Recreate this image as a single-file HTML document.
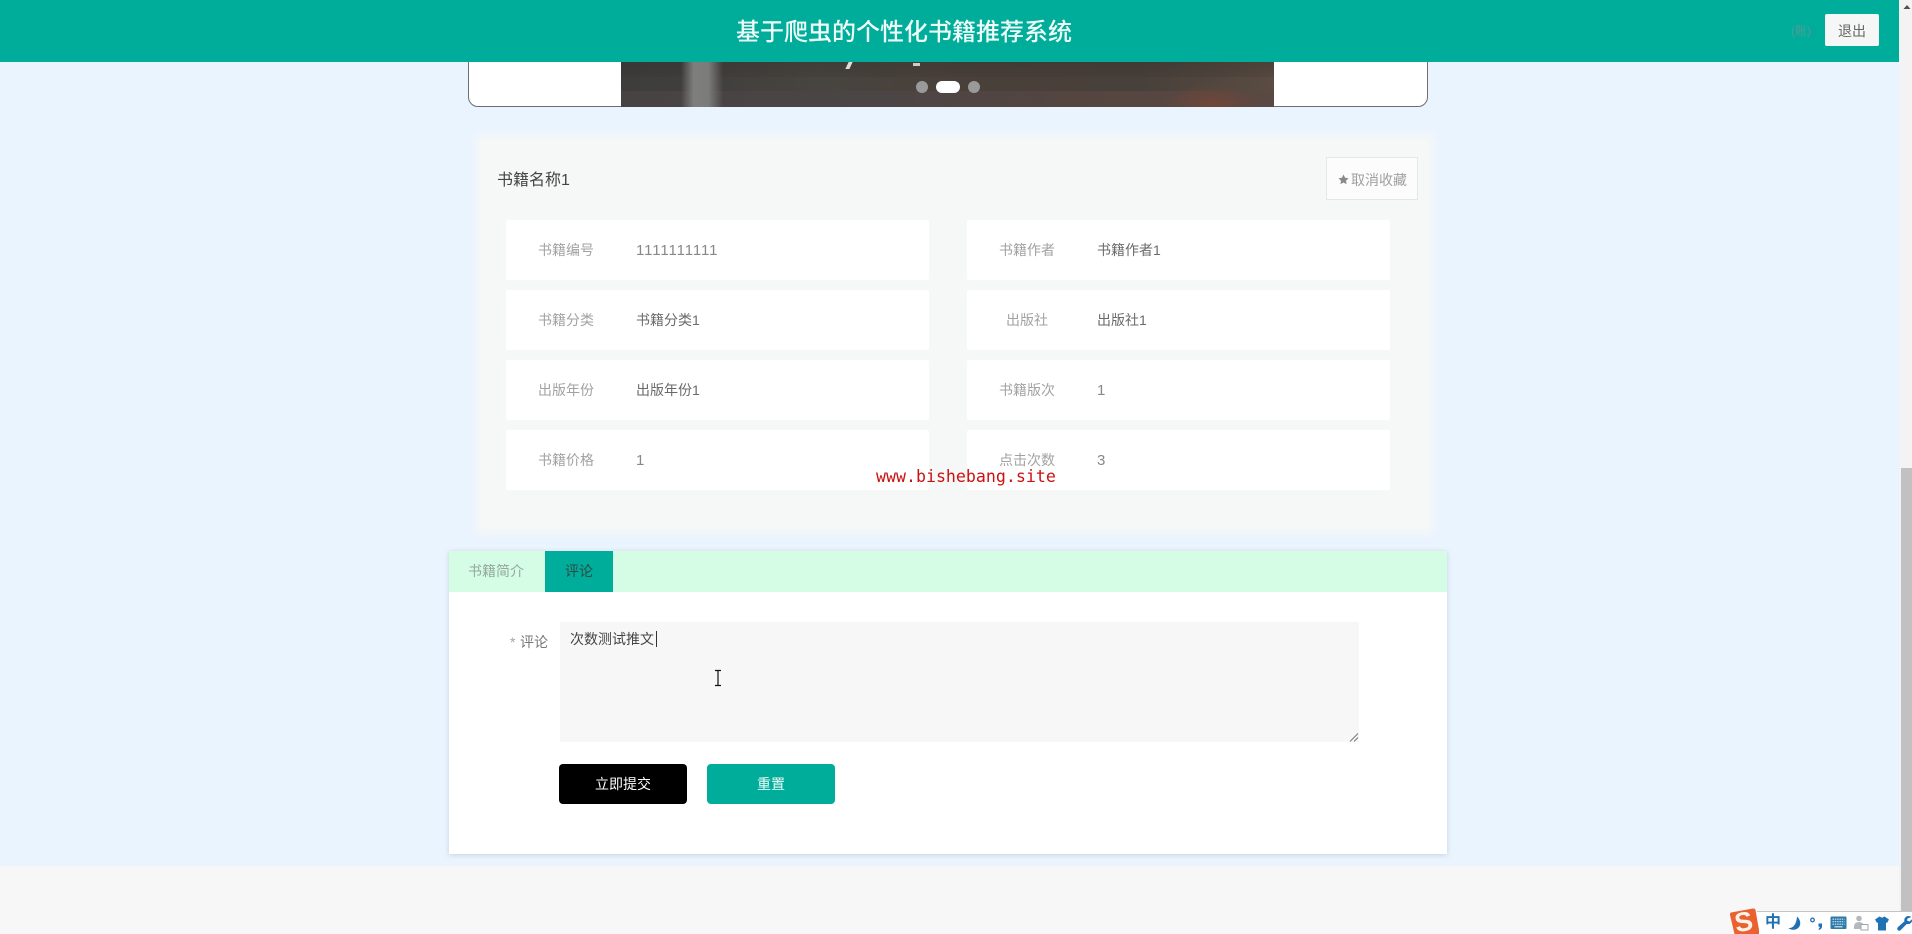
<!DOCTYPE html>
<html lang="zh">
<head>
<meta charset="utf-8">
<title>基于爬虫的个性化书籍推荐系统</title>
<style>
html,body{margin:0;padding:0;width:1912px;height:934px;overflow:hidden;background:#f7f7f7;font-family:"Liberation Sans","Noto Sans CJK SC",sans-serif;}
div,span{position:absolute;box-sizing:border-box;}
.t{white-space:nowrap;line-height:20px;font-size:14px;}
.row{background:#fff;height:60px;width:423px;border-radius:2px;}
.l{color:#a2a2a2;}
.v{color:#6a6a6a;}
</style>
</head>
<body>
<div style="left:0;top:0;width:1899px;height:866px;background:#eaf4fe;"></div>

<!-- carousel -->
<div style="left:468px;top:-20px;width:960px;height:127px;background:#fff;border:1px solid #6e6e72;border-radius:0 0 10px 10px;"></div>
<div style="left:621px;top:55px;width:653px;height:52px;overflow:hidden;background:#45403d;">
  <div style="left:0;top:0;width:653px;height:52px;background:linear-gradient(90deg,#3e3d3b 0,#3f3e3c 8%,#48443f 30%,#4a403a 55%,#48403a 80%,#5a4c42 100%);"></div>
  <div style="left:0;top:0;width:653px;height:22px;background:linear-gradient(180deg,rgba(48,44,40,.4),rgba(50,46,44,.15));"></div>
  <div style="left:0;top:36px;width:653px;height:16px;background:linear-gradient(90deg,#474342,#4c4545 40%,#544540 70%,#5a4842 100%);"></div>
  <div style="left:60px;top:0;width:42px;height:52px;background:linear-gradient(90deg,rgba(80,80,78,0),#7e7e7c 30%,#7c7c7a 65%,rgba(78,77,75,0));"></div>
  <div style="left:545px;top:30px;width:90px;height:22px;background:radial-gradient(ellipse at 50% 90%,rgba(125,70,52,.65),rgba(90,60,52,0) 75%);"></div>
  <div style="left:226px;top:7px;width:4px;height:7px;background:#ddd;transform:skewX(-25deg);"></div>
  <div style="left:292px;top:8px;width:7px;height:3px;background:#ccc;"></div>
</div>
<div style="left:916px;top:81px;width:12px;height:12px;border-radius:50%;background:#9a9a9a;"></div>
<div style="left:936px;top:81px;width:24px;height:12px;border-radius:6px;background:#fff;"></div>
<div style="left:968px;top:81px;width:12px;height:12px;border-radius:50%;background:#9a9a9a;"></div>

<!-- header -->
<div style="left:0;top:0;width:1899px;height:62px;background:#00ad9b;"></div>
<div class="t" style="left:736px;top:16px;font-size:24px;line-height:34px;color:#eefcf8;font-weight:500;">基于爬虫的个性化书籍推荐系统</div>
<div class="t" style="left:1791px;top:21px;font-size:12px;color:#4f9c95;">(账)</div>
<div style="left:1825px;top:14px;width:54px;height:32px;background:#f5f7f7;border-radius:2px;"></div>
<div class="t" style="left:1838px;top:21px;color:#666;">退出</div>

<!-- detail panel -->
<div style="left:481px;top:140px;width:948px;height:388px;background:#f6f7f7;box-shadow:0 0 8px 5px #f6f7f7;"></div>
<div class="t" style="left:497px;top:171px;font-size:16px;color:#444;">书籍名称1</div>
<div style="left:1326px;top:157px;width:92px;height:43px;background:#fcfcfc;border:1px solid #e6e6e6;"></div>
<svg style="position:absolute;left:1338px;top:174px" width="11" height="11" viewBox="0 0 24 24"><path d="M12 1l3.400 7.200 7.600 1-5.600 5.400 1.400 7.800L12 18.600 5.200 22.400l1.400-7.800L1 9.200l7.600-1z" fill="#8a8a8a"/></svg>
<div class="t" style="left:1351px;top:170px;color:#a0a0a0;">取消收藏</div>

<div class="row" style="left:506px;top:220px;"></div>
<div class="row" style="left:967px;top:220px;"></div>
<div class="row" style="left:506px;top:290px;"></div>
<div class="row" style="left:967px;top:290px;"></div>
<div class="row" style="left:506px;top:360px;"></div>
<div class="row" style="left:967px;top:360px;"></div>
<div class="row" style="left:506px;top:430px;"></div>
<div class="row" style="left:967px;top:430px;"></div>

<div class="t l" style="left:538px;top:240px;">书籍编号</div>
<div class="t v" style="left:636px;top:241px;color:#888;font-size:15px;letter-spacing:.9px;">1111111111</div>
<div class="t l" style="left:999px;top:240px;">书籍作者</div>
<div class="t v" style="left:1097px;top:240px;">书籍作者1</div>

<div class="t l" style="left:538px;top:310px;">书籍分类</div>
<div class="t v" style="left:636px;top:310px;">书籍分类1</div>
<div class="t l" style="left:1006px;top:310px;">出版社</div>
<div class="t v" style="left:1097px;top:310px;">出版社1</div>

<div class="t l" style="left:538px;top:380px;">出版年份</div>
<div class="t v" style="left:636px;top:380px;">出版年份1</div>
<div class="t l" style="left:999px;top:380px;">书籍版次</div>
<div class="t v" style="left:1097px;top:381px;color:#888;font-size:15px;">1</div>

<div class="t l" style="left:538px;top:450px;">书籍价格</div>
<div class="t v" style="left:636px;top:451px;color:#888;font-size:15px;">1</div>
<div class="t l" style="left:999px;top:450px;">点击次数</div>
<div class="t v" style="left:1097px;top:451px;color:#888;font-size:15px;">3</div>

<div class="t" style="left:876px;top:467px;font-family:'DejaVu Sans Mono',monospace;font-size:16.6px;color:#cc1111;">www.bishebang.site</div>

<!-- tabs panel -->
<div style="left:449px;top:551px;width:998px;height:303px;background:#fff;box-shadow:0 1px 5px rgba(120,140,160,.3);"></div>
<div style="left:449px;top:551px;width:998px;height:41px;background:#d5fde5;"></div>
<div style="left:545px;top:551px;width:68px;height:41px;background:#00ad9b;"></div>
<div class="t" style="left:468px;top:561px;color:#93a89c;">书籍简介</div>
<div class="t" style="left:565px;top:561px;color:#2e4a44;">评论</div>

<div class="t" style="left:510px;top:632px;color:#b0a0a0;">*</div>
<div class="t" style="left:520px;top:632px;color:#777;">评论</div>
<div style="left:560px;top:622px;width:799px;height:120px;background:#f7f7f7;"></div>
<div class="t" style="left:570px;top:629px;color:#444;">次数测试推文</div>
<div style="left:656px;top:631px;width:1px;height:16px;background:#333;"></div>
<svg style="position:absolute;left:1349px;top:732px" width="10" height="10" viewBox="0 0 10 10"><path d="M1 9.500L9 1.500M5 9.500L9 5.500" stroke="#777" stroke-width="1" fill="none"/></svg>
<svg style="position:absolute;left:713px;top:669px" width="10" height="18" viewBox="0 0 10 18"><path d="M2 1.500h6M5 1.500v15M2 16.500h6" stroke="#111" stroke-width="1.200" fill="none"/></svg>

<div style="left:559px;top:764px;width:128px;height:40px;background:#000;border-radius:4px;"></div>
<div class="t" style="left:595px;top:774px;color:#fff;">立即提交</div>
<div style="left:707px;top:764px;width:128px;height:40px;background:#00ad9b;border-radius:4px;"></div>
<div class="t" style="left:757px;top:774px;color:#eefcf8;">重置</div>

<!-- scrollbar -->
<div style="left:1899px;top:0;width:13px;height:934px;background:#f3f3f3;"></div>
<div style="left:1901px;top:468px;width:11px;height:466px;background:#c1c1c1;"></div>
<svg style="position:absolute;left:1903px;top:4px" width="8" height="6" viewBox="0 0 8 6"><path d="M4 1L7.500 5H.5z" fill="#505050"/></svg>

<!-- IME bar -->
<div style="left:1757px;top:911px;width:155px;height:23px;background:#fff;border-top:1px solid #c4c4c4;"></div>
<svg style="position:absolute;left:1728px;top:906px" width="32" height="28" viewBox="0 0 32 28">
  <path d="M3 6.500L25 2.500q2-.3 2.500 1.600L31 24v4H6.500L2 9q-.3-2 1-2.500z" fill="#e9622f"/>
  <text x="15.500" y="25" font-family="'Liberation Sans',sans-serif" font-size="27" font-weight="bold" fill="#fdf3ea" text-anchor="middle" transform="rotate(-10 15 15)">S</text>
</svg>
<div class="t" style="left:1765px;top:913px;font-size:16px;font-weight:bold;color:#1f73b5;">中</div>
<svg style="position:absolute;left:1788px;top:916px" width="15" height="15" viewBox="0 0 15 15"><path d="M9 .5C13 4 13.500 10 9.500 12.500 6.500 14.500 2 14 .5 12 4.500 12.500 8.500 9 9 .5z" fill="#1f6fb5"/></svg>
<svg style="position:absolute;left:1809px;top:916px" width="14" height="16" viewBox="0 0 14 16"><circle cx="3.500" cy="4" r="1.800" fill="none" stroke="#2a74b5" stroke-width="1.300"/><path d="M9.500 7.500h3.500v3q0 2.500-3 3.500l-.5-1q1.200-.6 1.400-2.200H9.500z" fill="#1f6fb5"/></svg>
<svg style="position:absolute;left:1830px;top:916px" width="17" height="14" viewBox="0 0 17 14"><rect x=".5" y=".5" width="16" height="12.500" rx="1" fill="#2c7ba8"/><path d="M2.500 3.200h12M2.500 5.700h12M2.500 8.200h12" stroke="#cfe4ee" stroke-width="1.200" stroke-dasharray="1.500 .8"/><path d="M4.500 10.800h8" stroke="#cfe4ee" stroke-width="1.200"/></svg>
<svg style="position:absolute;left:1853px;top:915px" width="16" height="16" viewBox="0 0 16 16"><circle cx="6" cy="3.500" r="2.800" fill="#b4b9bd"/><path d="M1 12q0-5 5-5t5 5v2H1z" fill="#b4b9bd"/><rect x="8" y="9.500" width="7" height="5.500" fill="#fff" stroke="#a0a6ab"/></svg>
<svg style="position:absolute;left:1875px;top:916px" width="14" height="15" viewBox="0 0 14 15"><path d="M4.500 .5L7 1.800 9.500 .5 14 3.500l-2 3.500-1-.5V14.500H3V6.500L2 7 0 3.500z" fill="#1f73b5"/></svg>
<svg style="position:absolute;left:1897px;top:915px" width="15" height="16" viewBox="0 0 15 16"><path d="M14.500 2q-3.500-2-6 .2-1.800 1.800-1 4L.8 12.300q-1.200 1.500 0 2.800 1.300 1.200 2.800 0L9.700 9q2.800.6 4.500-1.200 1-1.500.8-3.500L12.500 6.500 10 5.500l.5-2z" fill="#1f6fb5"/></svg>
</body>
</html>
